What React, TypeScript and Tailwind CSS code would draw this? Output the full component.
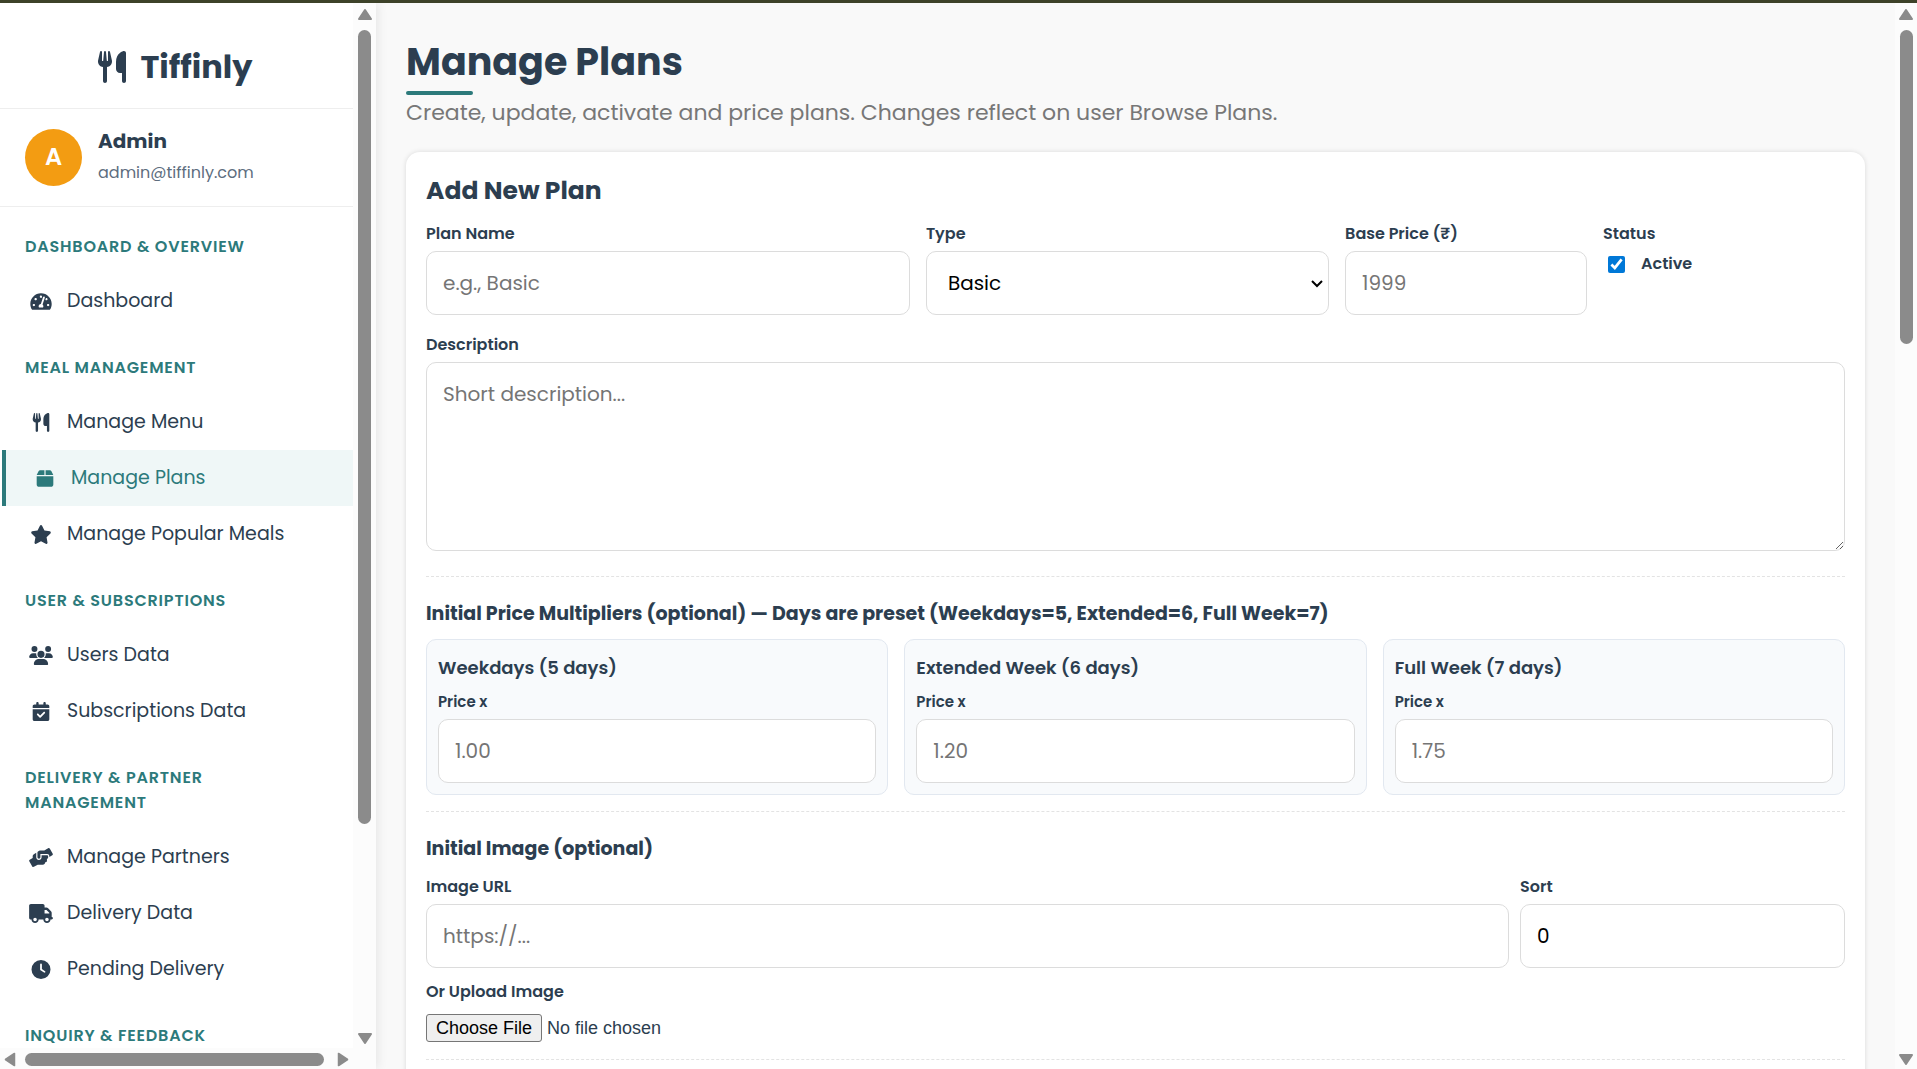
import React from "react";
import { FaHandsHelping, FaTachometerAlt } from "react-icons/fa";
import { FaBox, FaCalendarCheck, FaClock, FaStar, FaTruck, FaUsers, FaUtensils } from "react-icons/fa6";

type IconType = React.ComponentType<{ className?: string }>;
type NavItem = { label: string; icon: IconType; active?: boolean };
type NavSection = { title: string; items: NavItem[] };

const sections: NavSection[] = [
  { title: "Dashboard & Overview", items: [{ label: "Dashboard", icon: FaTachometerAlt }] },
  {
    title: "Meal Management",
    items: [
      { label: "Manage Menu", icon: FaUtensils },
      { label: "Manage Plans", icon: FaBox, active: true },
      { label: "Manage Popular Meals", icon: FaStar },
    ],
  },
  {
    title: "User & Subscriptions",
    items: [
      { label: "Users Data", icon: FaUsers },
      { label: "Subscriptions Data", icon: FaCalendarCheck },
    ],
  },
  {
    title: "Delivery & Partner Management",
    items: [
      { label: "Manage Partners", icon: FaHandsHelping },
      { label: "Delivery Data", icon: FaTruck },
      { label: "Pending Delivery", icon: FaClock },
    ],
  },
  { title: "Inquiry & Feedback", items: [] },
];

const multipliers = [
  { id: "weekdays", title: "Weekdays (5 days)", placeholder: "1.00" },
  { id: "extended", title: "Extended Week (6 days)", placeholder: "1.20" },
  { id: "fullweek", title: "Full Week (7 days)", placeholder: "1.75" },
];

const control =
  "block h-16 w-full rounded-[10px] border border-[#dcdcdc] bg-white px-4 text-[20px] text-black placeholder:text-[#757575]";

function Arrow({ className }: { className: string }) {
  return (
    <svg viewBox="0 0 14 11" className={`h-[11px] w-[14px] shrink-0 ${className}`} aria-hidden="true">
      <path d="M7 1 13 10H1Z" fill="#8b8b8b" stroke="#8b8b8b" strokeWidth="2" strokeLinejoin="round" />
    </svg>
  );
}

function VerticalBar({ width, thumb }: { width: string; thumb: string }) {
  return (
    <div aria-hidden="true" className={`flex shrink-0 flex-col items-center bg-[#fcfcfc] pt-[6px] pb-1 ${width}`}>
      <Arrow className="" />
      <div className="my-[10px] min-h-0 w-full flex-1">
        <div className={`mx-auto w-[13px] rounded-full bg-[#8b8b8b] ${thumb}`} />
      </div>
      <Arrow className="rotate-180" />
    </div>
  );
}

function Field({ id, label, small, children }: { id: string; label: string; small?: boolean; children: React.ReactNode }) {
  return (
    <div>
      <label htmlFor={id} className={`mb-[5px] block font-semibold leading-6 ${small ? "text-[15px]" : "text-base"}`}>
        {label}
      </label>
      {children}
    </div>
  );
}

function Sidebar() {
  return (
    <aside className="relative z-10 flex w-[376px] shrink-0 flex-col bg-[#fcfcfc] shadow-[2px_0_10px_rgba(0,0,0,0.08)]">
      <div className="flex min-h-0 flex-1">
        <div className="min-w-0 flex-1 overflow-hidden bg-white">
          <div className="flex items-center justify-center gap-3 border-b border-[#eeeeee] pt-10 pr-1 pb-[17px]">
            <FaUtensils className="size-8" />
            <span className="text-[32px] leading-[48px] font-bold">Tiffinly</span>
          </div>
          <div className="flex items-center gap-4 border-b border-[#eeeeee] px-[25px] pt-[18px] pb-[19px]">
            <div className="flex size-[57px] items-center justify-center rounded-full bg-[#f39c12] text-2xl font-semibold text-white">
              A
            </div>
            <div>
              <div className="text-xl leading-7 font-bold">Admin</div>
              <div className="mt-1 text-base leading-7 text-[#5d6d7e]">admin@tiffinly.com</div>
            </div>
          </div>
          <nav className="mt-px">
            {sections.map((section) => (
              <div key={section.title} className="pt-[26px]">
                <h3 className="mb-[14px] pr-16 pl-[25px] text-base leading-[25px] font-semibold tracking-wider text-[#2c7a7b] uppercase">
                  {section.title}
                </h3>
                {section.items.map(({ label, icon: Icon, active }) => (
                  <a
                    key={label}
                    href="#"
                    className={`ml-0.5 flex h-14 items-center gap-[10px] px-[23px] text-[19px] ${
                      active ? "border-l-4 border-[#2c7a7b] bg-[#eff7f7] text-[#2c7a7b]" : ""
                    }`}
                  >
                    <span className="flex w-8 justify-center">
                      <Icon className="h-[19px] w-6" />
                    </span>
                    {label}
                  </a>
                ))}
              </div>
            ))}
          </nav>
        </div>
        <VerticalBar width="w-[23px]" thumb="h-[80%]" />
      </div>
      <div aria-hidden="true" className="mr-[23px] flex h-[21px] items-center justify-between gap-2 px-[3px] pt-px">
        <Arrow className="-rotate-90" />
        <div className="mr-1 h-[13px] flex-1 rounded-full bg-[#8b8b8b]" />
        <Arrow className="rotate-90" />
      </div>
    </aside>
  );
}

export default function App() {
  return (
    <div className="flex h-screen flex-col overflow-hidden border-t-3 border-[#3d4229] bg-[#f9f9f9] font-['Poppins','Inter',sans-serif] text-[#2c3e50]">
      <div className="flex min-h-0 flex-1">
        <Sidebar />
        <main className="min-w-0 flex-1 overflow-hidden px-[30px] pt-[31px]">
          <h1 className="text-[38px] leading-[56px] font-bold">Manage Plans</h1>
          <div className="mt-px h-1 w-[67px] rounded-sm bg-[#2c7a7b]" />
          <p className="mt-px mb-[22px] text-[22px] leading-[34px] text-[#777777]">
            Create, update, activate and price plans. Changes reflect on user Browse Plans.
          </p>

          <form className="rounded-[14px] bg-white p-5 pb-24 shadow-[0_0_5px_rgba(0,0,0,0.13)]">
            <h2 className="text-[25px] leading-[37px] font-bold">Add New Plan</h2>
            <div className="mt-[13px] grid grid-cols-[1.2fr_1fr_0.6fr_0.6fr] gap-4">
              <Field id="plan-name" label="Plan Name">
                <input id="plan-name" type="text" placeholder="e.g., Basic" className={control} />
              </Field>
              <Field id="plan-type" label="Type">
                <div className="relative">
                  <select id="plan-type" className={`${control} appearance-none pl-[21px]`}>
                    <option>Basic</option>
                  </select>
                  <svg
                    viewBox="0 0 12 8"
                    className="pointer-events-none absolute top-[29px] right-[6px] h-2 w-3"
                    aria-hidden="true"
                  >
                    <path d="m1 1 5 5 5-5" fill="none" stroke="#000" strokeWidth="2" />
                  </svg>
                </div>
              </Field>
              <Field id="base-price" label="Base Price (₹)">
                <input id="base-price" type="text" inputMode="decimal" placeholder="1999" className={control} />
              </Field>
              <div>
                <div className="mb-[6px] text-base leading-6 font-semibold">Status</div>
                <label className="flex items-center gap-4 pl-[5px] text-base leading-6 font-semibold">
                  <input type="checkbox" defaultChecked className="size-[17px] accent-[#0078d7]" />
                  Active
                </label>
              </div>
            </div>

            <div className="mt-[18px]">
              <Field id="description" label="Description">
                <textarea
                  id="description"
                  placeholder="Short description..."
                  className={`${control} h-[189px] resize-y py-4`}
                />
              </Field>
            </div>

            <section className="mt-[25px] border-t border-dashed border-[#e3e3e3] pt-[22px]">
              <h3 className="mb-[10px] text-[19px] leading-[30px] font-bold">
                Initial Price Multipliers (optional) — Days are preset (Weekdays=5, Extended=6, Full Week=7)
              </h3>
              <div className="grid grid-cols-3 gap-4">
                {multipliers.map((m) => (
                  <div key={m.id} className="rounded-[10px] border border-[#e2e8f0] bg-[#f8fafc] px-[11px] pt-[14px] pb-[11px]">
                    <h4 className="mb-2 text-lg leading-7 font-semibold">{m.title}</h4>
                    <Field id={m.id} label="Price x" small>
                      <input id={m.id} type="text" inputMode="decimal" placeholder={m.placeholder} className={control} />
                    </Field>
                  </div>
                ))}
              </div>
            </section>

            <section className="mt-4 border-t border-dashed border-[#e3e3e3] pt-[22px]">
              <h3 className="mb-[11px] text-[19px] leading-[30px] font-bold">Initial Image (optional)</h3>
              <div className="grid grid-cols-[1fr_0.3fr] gap-[11px]">
                <Field id="image-url" label="Image URL">
                  <input id="image-url" type="url" placeholder="https://..." className={control} />
                </Field>
                <Field id="sort" label="Sort">
                  <input id="sort" type="text" inputMode="numeric" defaultValue="0" className={control} />
                </Field>
              </div>
              <div className="mt-3">
                <label htmlFor="upload" className="block text-base leading-6 font-semibold">
                  Or Upload Image
                </label>
                <input
                  id="upload"
                  type="file"
                  className="mt-[10px] block font-['Liberation_Sans',sans-serif] text-lg leading-[26px] file:mr-[5px] file:rounded-[3px] file:border file:border-solid file:border-[#767676] file:bg-[#efefef] file:px-[9px] file:text-black"
                />
              </div>
            </section>
            <div className="mt-[17px] border-t border-dashed border-[#e3e3e3]" />
          </form>
        </main>
        <VerticalBar width="w-[22px]" thumb="h-[31%]" />
      </div>
    </div>
  );
}
